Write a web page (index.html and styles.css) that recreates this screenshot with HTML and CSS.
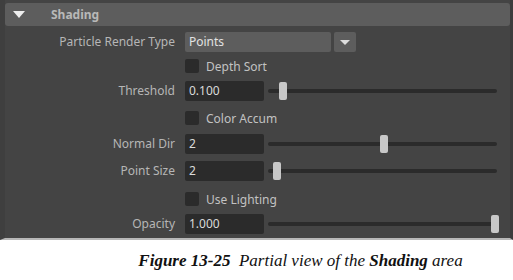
FILE: index.html
```html
<!DOCTYPE html>
<html lang="en">
<head>
    <meta charset="UTF-8">
    <meta name="viewport" content="width=device-width, initial-scale=1.0">
    <title>Shading</title>
    <link rel="stylesheet" href="styles.css">
</head>
<body>
    <div class="panel">
        <div class="section-header">
            <span class="arrow"></span>
            <span class="section-title">Shading</span>
        </div>

        <div class="attr-grid">
            <label class="attr-label">Particle Render Type</label>
            <div class="attr-control">
                <div class="dropdown">Points</div>
                <div class="dropdown-btn"><span class="arrow small"></span></div>
            </div>

            <span></span>
            <div class="attr-control">
                <span class="checkbox"></span><span class="check-text">Depth Sort</span>
            </div>

            <label class="attr-label">Threshold</label>
            <div class="attr-control">
                <div class="field">0.100</div>
                <div class="slider"><span class="thumb" style="left: 6.5%"></span></div>
            </div>

            <span></span>
            <div class="attr-control">
                <span class="checkbox"></span><span class="check-text">Color Accum</span>
            </div>

            <label class="attr-label">Normal Dir</label>
            <div class="attr-control">
                <div class="field">2</div>
                <div class="slider"><span class="thumb" style="left: 50.5%"></span></div>
            </div>

            <label class="attr-label">Point Size</label>
            <div class="attr-control">
                <div class="field">2</div>
                <div class="slider"><span class="thumb" style="left: 4%"></span></div>
            </div>

            <span></span>
            <div class="attr-control">
                <span class="checkbox"></span><span class="check-text">Use Lighting</span>
            </div>

            <label class="attr-label">Opacity</label>
            <div class="attr-control">
                <div class="field">1.000</div>
                <div class="slider"><span class="thumb" style="left: 99%"></span></div>
            </div>
        </div>
    </div>

    <p class="caption"><b>Figure 13-25</b>&nbsp; Partial view of the <b>Shading</b> area</p>
</body>
</html>
```

FILE: styles.css
```css
body {
    margin: 0;
    background: #fff;
    font-family: "Noto Sans", "DejaVu Sans", sans-serif;
}
.panel {
    background: #444;
    border-left: 5px solid #3f3f3f;
    border-right: 3px solid #3c3c3c;
    border-bottom: 2px solid #b8b8b8;
    padding: 3px 0 0 0;
    height: 235px;
    box-sizing: content-box;
}
.section-header {
    display: flex;
    align-items: center;
    height: 23px;
    background: #5d5d5d;
    border-radius: 3px;
}
.arrow {
    width: 0;
    height: 0;
    border-left: 6px solid transparent;
    border-right: 6px solid transparent;
    border-top: 7px solid #eee;
    margin-left: 8px;
}
.arrow.small {
    border-left-width: 5px;
    border-right-width: 5px;
    border-top: 5px solid #ddd;
    margin: 0;
}
.section-title {
    margin-left: 26px;
    font-size: 12px;
    font-weight: bold;
    color: #b8b8b8;
}
.attr-grid {
    display: grid;
    grid-template-columns: 170px 1fr;
    grid-template-rows: 22px 26px 24px 30px 22px 32px 24px 26px;
    column-gap: 10px;
    align-items: center;
    margin-top: 5px;
    font-size: 12px;
}
.attr-label {
    text-align: right;
    color: #b6b6b6;
    line-height: 20px;
}
.attr-control {
    display: flex;
    align-items: center;
}
.dropdown {
    width: 142px;
    height: 20px;
    line-height: 20px;
    padding-left: 4px;
    background: #5d5d5d;
    color: #e2e2e2;
    border-radius: 2px;
}
.dropdown-btn {
    width: 22px;
    height: 20px;
    margin-left: 3px;
    background: #5d5d5d;
    border-radius: 2px;
    display: flex;
    align-items: center;
    justify-content: center;
}
.checkbox {
    width: 14px;
    height: 14px;
    background: #2b2b2b;
    border-radius: 2px;
}
.check-text {
    margin-left: 7px;
    color: #c2c2c2;
}
.field {
    width: 75px;
    height: 20px;
    line-height: 20px;
    padding-left: 4px;
    background: #2b2b2b;
    color: #dadada;
    border-radius: 2px;
}
.slider {
    position: relative;
    width: 229px;
    height: 4px;
    margin-left: 4px;
    background: #2b2b2b;
    border-radius: 2px;
}
.thumb {
    position: absolute;
    top: -7px;
    width: 8px;
    height: 18px;
    margin-left: -4px;
    background: #c8c8c8;
    border-radius: 2px;
}
.caption {
    margin: 0;
    padding: 11px 0 0 88px;
    text-align: center;
    font-family: "Liberation Serif", serif;
    font-style: italic;
    font-size: 17px;
    color: #111;
}
```
